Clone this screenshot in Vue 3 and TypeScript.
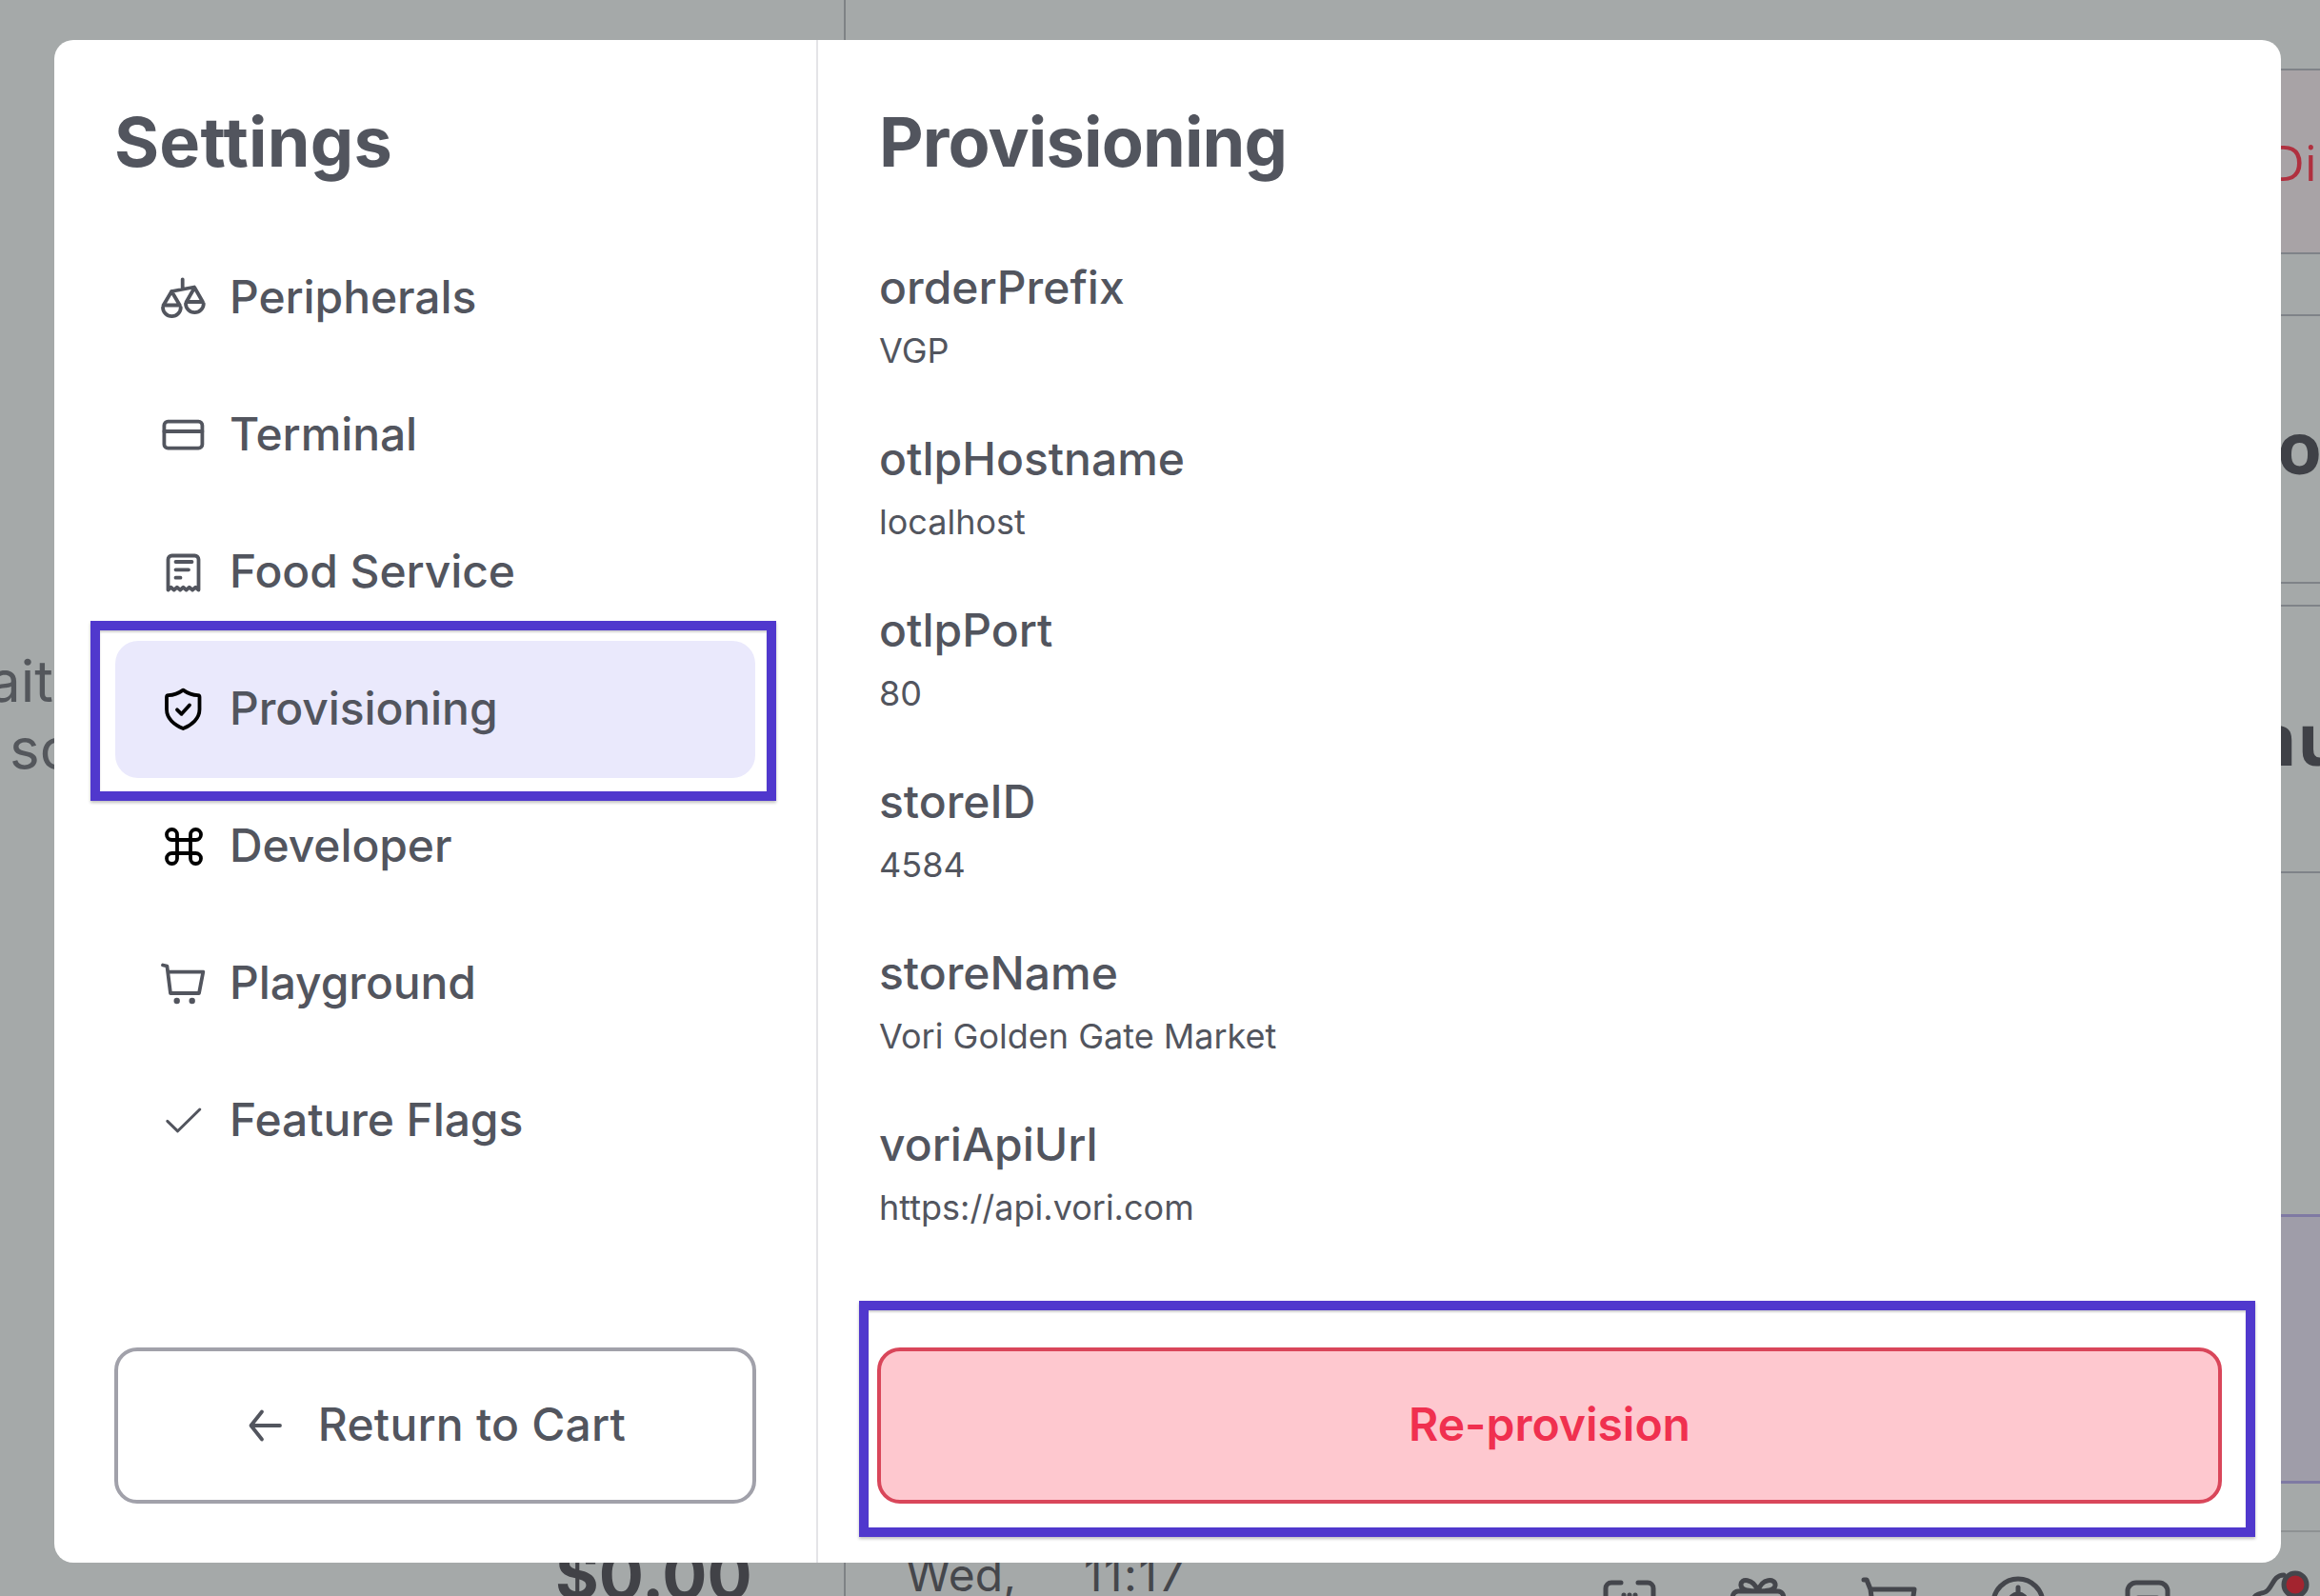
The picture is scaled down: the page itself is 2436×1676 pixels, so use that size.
<script setup lang="ts">
interface Field { label: string; value: string }
const fields: Field[] = [
  { label: 'orderPrefix', value: 'VGP' },
  { label: 'otlpHostname', value: 'localhost' },
  { label: 'otlpPort', value: '80' },
  { label: 'storeID', value: '4584' },
  { label: 'storeName', value: 'Vori Golden Gate Market' },
  { label: 'voriApiUrl', value: 'https://api.vori.com' },
]
</script>

<template>
  <div class="screen">
    <div class="page">
      <section class="left">
        <div class="message"><div class="m1">ait</div><div class="m2">sc</div></div>
        <div class="total">$0.00</div>
      </section>
      <section class="right">
        <div class="spacer top"></div>
        <div class="row discard"><span class="red">Di</span></div>
        <div class="spacer gap65"></div>
        <div class="row tall o"><span>o</span></div>
        <div class="spacer gap24"></div>
        <div class="row tall nu"><span>nu</span></div>
        <div class="spacer gap360"></div>
        <div class="purple"></div>
        <div class="spacer gap49"></div>
        <div class="bar">
          <span class="date">Wed,</span>
          <span class="time">11:17</span>
          <div class="bar-icons">
            <svg class="bi scan" viewBox="0 0 54 54"><path d="M2 24V8a6 6 0 0 1 6-6h10M36 2h10a6 6 0 0 1 6 6v16M21 15v10M27 15v10M33 15v10"/></svg>
            <svg class="bi gift" viewBox="0 0 58 54"><path d="M29 14C24 0 10 0 11 8c1 6 10 6 18 6 8 0 17 0 18-6 1-8-15-8-18 6zM2 22c0-4 2-8 6-8h42c4 0 6 4 6 8v12H2z"/></svg>
            <svg class="bi cart" viewBox="0 0 58 54"><path d="M2 2h3l4 10h46l-2 14M9 12l2 16"/></svg>
            <svg class="bi coin" viewBox="0 0 58 54"><circle cx="29" cy="29" r="26"/><circle cx="29" cy="28" r="9"/><path d="M29 12v6"/></svg>
            <svg class="bi rec" viewBox="0 0 48 54"><rect x="3" y="3" width="42" height="60" rx="9"/><path d="M14 19h20"/></svg>
            <svg class="bi gear" viewBox="0 0 60 54"><path d="M2 32c0-8 6-8 12-10 8-3 8-18 20-18"/><circle class="dot" cx="46" cy="14" r="12"/></svg>
          </div>
        </div>
      </section>
    </div>

    <div class="modal">
      <aside class="side">
        <h1 class="title side-title">Settings</h1>
        <nav class="nav">
          <div class="item">
            <svg class="ico" viewBox="0 0 48 48"><path d="M22.7 4.3V14M11 17l24-4.500M11.200 17 2.600 31.500h17.200zM2 33.800a9.400 9.400 0 0 0 18.800 0M35.300 13l-8.600 15h17.200zM26 29.800a9.400 9.400 0 0 0 18.800 0"/></svg>
            <span class="txt">Peripherals</span>
          </div>
          <div class="item">
            <svg class="ico" viewBox="0 0 48 48"><rect x="3.400" y="9.700" width="40" height="28" rx="4"/><path d="M3.400 20h40"/></svg>
            <span class="txt">Terminal</span>
          </div>
          <div class="item">
            <svg class="ico" viewBox="0 0 48 48"><path d="M7.500 42.500V10.500a4 4 0 0 1 4-4h24a4 4 0 0 1 4 4v32l-3.200-2.800-3.200 2.800-3.300-2.800-3.200 2.800-3.200-2.800-3.200 2.800-3.300-2.800-3.200 2.800-3.200-2.800zM15.500 13h17M15.500 21.300h13.500M15.500 29.700h5"/></svg>
            <span class="txt">Food Service</span>
          </div>
          <div class="item active">
            <svg class="ico black" viewBox="0 0 48 48"><path d="M23.300 3.600c5 3.600 10.500 5.400 15.500 5.600 1 .1 1.700.8 1.700 1.800V24c0 9.500-8 16.500-17.200 20C14 40.500 6 33.500 6 24V11c0-1 .8-1.700 1.800-1.800 5-.2 10.500-2 15.500-5.600z"/><path d="M17 24.300l4.600 4.500L30 19.500"/></svg>
            <span class="txt">Provisioning</span>
            <div class="mark mark-nav"></div>
          </div>
          <div class="item">
            <svg class="ico black" viewBox="0 0 24 24"><path class="cmd" d="M15.500 5.750v12.500a2.750 2.750 0 1 0 2.750-2.750H5.750a2.750 2.750 0 1 0 2.750 2.750V5.750a2.750 2.750 0 1 0-2.750 2.750h12.500a2.750 2.750 0 1 0-2.750-2.750z"/></svg>
            <span class="txt">Developer</span>
          </div>
          <div class="item">
            <svg class="ico" viewBox="0 0 48 48"><path d="M2 4.500l4.400 1 3.600 28.500h30l4.300-22.300H7.500"/><circle class="fill" cx="16.700" cy="42" r="3.200"/><circle class="fill" cx="32.700" cy="42" r="3.200"/></svg>
            <span class="txt">Playground</span>
          </div>
          <div class="item">
            <svg class="ico thin" viewBox="0 0 48 48"><path d="M6.800 24.400l10.800 10.400L40.800 12"/></svg>
            <span class="txt">Feature Flags</span>
          </div>
        </nav>
        <button class="btn ghost">
          <svg class="ico" viewBox="0 0 48 48"><path d="M40 24H9.500M21 9.500 9.500 24 21 38.500"/></svg>
          <span class="txt">Return to Cart</span>
        </button>
      </aside>
      <main class="content">
        <h1 class="title main-title">Provisioning</h1>
        <div class="fields">
          <div v-for="f in fields" :key="f.label" class="field">
            <div class="label">{{ f.label }}</div>
            <div class="value">{{ f.value }}</div>
          </div>
        </div>
        <button class="btn danger">
          <span class="txt">Re-provision</span>
          <div class="mark mark-btn"></div>
        </button>
      </main>
    </div>
  </div>
</template>

<style scoped>
.screen {
  position: relative;
  width: 2436px;
  height: 1676px;
  overflow: hidden;
  background: #a5a9a9;
  font-family: Inter, "Liberation Sans", sans-serif;
}
.page {
  display: flex;
  width: 100%;
  height: 100%;
}
.left {
  width: 888px;
  flex: none;
  border-right: 2px solid #7e8285;
  display: flex;
  flex-direction: column;
  padding-top: 680px;
  box-sizing: border-box;
}
.message {
  font-size: 60px;
  line-height: 71px;
  color: #54575c;
}
.m1 { margin-left: -12px; }
.m2 { margin-left: 10px; }
.total {
  margin-top: auto;
  padding-left: 583px;
  font-size: 70px;
  line-height: 72px;
  font-weight: 700;
  color: #414247;
  margin-bottom: -14px;
}
.right {
  flex: 1;
  display: flex;
  flex-direction: column;
  min-width: 0;
}
.spacer { flex: none; }
.top { height: 72px; }
.gap65 { height: 63px; }
.gap24 { height: 22px; }
.gap360 { height: 358px; }
.gap49 { height: 49px; }
.row {
  flex: none;
  display: flex;
  align-items: center;
  border-top: 2px solid #7f8388;
  border-bottom: 2px solid #7f8388;
  box-sizing: border-box;
  overflow: hidden;
}
.discard { height: 195px; background: #a8a3a6; padding-left: 1494px; }
.red {
  color: #b0303f;
  font-family: "Open Sans", sans-serif;
  font-size: 52px;
}
.tall {
  font-family: "Open Sans", sans-serif;
  font-size: 76px;
  font-weight: 700;
  color: #3f4147;
}
.o { height: 283px; padding-left: 1503px; padding-bottom: 6px; }
.nu { height: 282px; padding-left: 1474px; padding-bottom: 4px; }
.purple {
  flex: none;
  height: 283px;
  box-sizing: border-box;
  background: #9f9da9;
  border-top: 3px solid #7f7aa3;
  border-bottom: 3px solid #7f7aa3;
}
.bar {
  flex: none;
  position: relative;
  height: 71px;
  border-top: 2px solid #8e9293;
  box-sizing: border-box;
  display: flex;
  color: #45474c;
  font-size: 48px;
  line-height: 60px;
}
.date { margin-left: 63px; padding-top: 15px; }
.time { margin-left: 71px; padding-top: 15px; letter-spacing: 1.5px; }
.bar-icons {
  position: absolute;
  left: 0;
  top: 0;
}
.bi {
  position: absolute;
  fill: none;
  stroke: #44464c;
  stroke-width: 5;
  stroke-linecap: round;
  stroke-linejoin: round;
  overflow: visible;
}
.scan { left: 796px; top: 51px; width: 54px; height: 54px; }
.gift { left: 929px; top: 48px; width: 58px; height: 54px; }
.cart { left: 1067px; top: 48px; width: 58px; height: 54px; }
.coin { left: 1202px; top: 46px; width: 58px; height: 54px; }
.rec { left: 1343px; top: 50px; width: 48px; height: 54px; }
.gear { left: 1476px; top: 41px; width: 60px; height: 54px; }
.dot { fill: #a3242f; stroke: #44464c; }

.modal {
  position: absolute;
  left: 57px;
  top: 42px;
  width: 2338px;
  height: 1599px;
  display: flex;
  background: #fff;
  border-radius: 20px;
  overflow: hidden;
}
.side {
  width: 802px;
  flex: none;
  box-sizing: border-box;
  border-right: 2px solid #e4e4e7;
  padding: 63px 63px 62px 63px;
  display: flex;
  flex-direction: column;
}
.title {
  margin: 0;
  font-size: 72px;
  line-height: 88px;
  font-weight: 700;
  color: #52555e;
}
.side-title { letter-spacing: 0.2px; }
.main-title { padding-left: 2px; letter-spacing: -0.85px; }
.nav {
  margin: 48px 1px 0;
  display: flex;
  flex-direction: column;
  flex: 1;
}
.item {
  position: relative;
  height: 144px;
  padding-left: 48px;
  display: flex;
  align-items: center;
  gap: 24px;
  border-radius: 24px;
  font-size: 48px;
  font-weight: 500;
  color: #52555e;
}
.txt { padding-bottom: 3px; }
.item .txt { letter-spacing: -0.1px; }
.item.active { background: #eae9fc; }
.ico {
  width: 48px;
  height: 48px;
  flex: none;
  fill: none;
  stroke: #52555e;
  stroke-width: 3.8;
  stroke-linecap: round;
  stroke-linejoin: round;
}
.ico .fill { fill: #52555e; stroke: none; }
.ico.black { stroke: #000; }
.ico.thin { stroke-width: 3; }
.cmd { stroke-width: 1.9; }
.mark {
  position: absolute;
  border: 10px solid #5038cd;
  box-shadow: 0 2px 3px rgba(0, 0, 0, 0.25), inset 0 2px 2px rgba(0, 0, 0, 0.18);
  pointer-events: none;
}
.mark-nav { left: -26px; right: -22px; top: -21px; bottom: -24px; }
.mark-btn { left: -23px; right: -39px; top: -53px; bottom: -39px; }
.btn {
  position: relative;
  height: 164px;
  box-sizing: border-box;
  width: 100%;
  flex: none;
  display: flex;
  align-items: center;
  justify-content: center;
  border-radius: 24px;
  font-family: inherit;
  font-size: 48px;
  padding: 0;
}
.ghost {
  gap: 32px;
  padding-right: 3px;
  background: #fff;
  border: 4px solid #a1a1aa;
  color: #52555e;
  font-weight: 500;
  letter-spacing: 0.2px;
}
.danger {
  background: #fec8cf;
  border: 4px solid #d9465a;
  color: #f0304f;
  font-weight: 600;
}
.content {
  flex: 1;
  box-sizing: border-box;
  padding: 63px 62px 62px 62px;
  display: flex;
  flex-direction: column;
  min-width: 0;
}
.fields {
  flex: 1;
  margin-top: 73px;
  padding-left: 2px;
  display: flex;
  flex-direction: column;
  gap: 51px;
}
.field { height: 129px; }
.label {
  font-size: 48px;
  line-height: 72px;
  font-weight: 500;
  color: #52555e;
}
.value {
  margin-top: 3px;
  font-size: 36px;
  line-height: 54px;
  color: #52555e;
}
</style>
